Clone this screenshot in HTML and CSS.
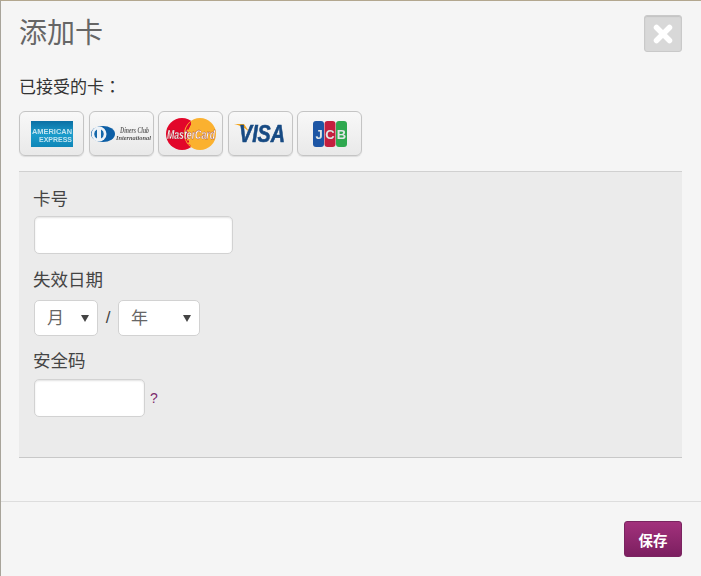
FILE: index.html
```html
<!DOCTYPE html>
<html lang="zh-CN">
<head>
    <meta charset="UTF-8">
    <title>添加卡</title>
    <link rel="stylesheet" href="styles.css">
</head>
<body>
    <div class="dialog">
        <div class="dialog-head">
            <h1 class="dialog-title">添加卡</h1>
            <button class="close-btn" type="button" aria-label="关闭">
                <svg width="24" height="24" viewBox="0 0 24 24"><path d="M5.500 5.500l13 13M18.500 5.500l-13 13" stroke="#fff" stroke-width="5.500" stroke-linecap="round"/></svg>
            </button>
        </div>

        <div class="accepted">
            <p class="accepted-label" lang="zh-TW">已接受的卡：</p>
            <div class="card-list">
                <div class="card-logo">
                    <svg width="44" height="28" viewBox="0 0 44 28">
                        <defs><linearGradient id="amex" x1="0" y1="0" x2="0" y2="1"><stop offset="0" stop-color="#0b6fa4"/><stop offset="0.5" stop-color="#1b9ccb"/><stop offset="1" stop-color="#0f86b8"/></linearGradient></defs>
                        <rect x="1" y="1" width="42" height="26" fill="url(#amex)"/>
                        <text x="2" y="13.500" class="amex-text" textLength="40" lengthAdjust="spacingAndGlyphs">AMERICAN</text>
                        <text x="9" y="22" class="amex-text" textLength="33" lengthAdjust="spacingAndGlyphs">EXPRESS</text>
                    </svg>
                </div>
                <div class="card-logo">
                    <svg width="62" height="20" viewBox="0 0 62 20">
                        <ellipse cx="13" cy="10" rx="12" ry="8" fill="#0d5fa6"/>
                        <circle cx="9" cy="10" r="7.500" fill="#eef3f8"/>
                        <path d="M7 5.500a5 5 0 0 0 0 9zM11 5.500a5 5 0 0 1 0 9z" fill="#1568ab"/>
                        <text x="30" y="9" class="diners-top" textLength="29" lengthAdjust="spacingAndGlyphs">Diners Club</text>
                        <text x="26" y="15.500" class="diners-bottom" textLength="35" lengthAdjust="spacingAndGlyphs">International</text>
                    </svg>
                </div>
                <div class="card-logo">
                    <svg width="52" height="34" viewBox="0 0 52 34">
                        <circle cx="17" cy="17" r="16" fill="#e2062a"/>
                        <circle cx="35" cy="17" r="16" fill="#fbb12f"/>
                        <path d="M26 4.500a16 16 0 0 0 0 25l-1-2h-2v-2h1v-2h-2v-2h1v-2h-1v-3h1v-2h-1v-2h2v-2h1v-2h1z" fill="#e2062a"/>
                        <text x="2" y="22" class="mc-text" textLength="48" lengthAdjust="spacingAndGlyphs">MasterCard</text>
                    </svg>
                </div>
                <div class="card-logo">
                    <svg width="52" height="24" viewBox="0 0 52 24">
                        <path d="M0 2h10l6 9C12 6 6 3.500 0 2z" fill="#f2a51f"/>
                        <text x="5" y="19.500" class="visa-text" textLength="46" lengthAdjust="spacingAndGlyphs">VISA</text>
                    </svg>
                </div>
                <div class="card-logo">
                    <svg width="36" height="28" viewBox="0 0 36 28">
                        <rect x="1" y="1" width="11" height="26" rx="3" fill="#1d56a5"/>
                        <rect x="12.500" y="1" width="11" height="26" rx="3" fill="#c41f3e"/>
                        <rect x="24" y="1" width="11" height="26" rx="3" fill="#2fa84f"/>
                        <text x="7" y="19" class="jcb-text" text-anchor="middle">J</text>
                        <text x="18" y="19" class="jcb-text" text-anchor="middle">C</text>
                        <text x="29.500" y="19" class="jcb-text" text-anchor="middle">B</text>
                    </svg>
                </div>
            </div>
        </div>

        <form class="card-form">
            <label class="field-label" for="cardNumber">卡号</label>
            <input class="text-input number-input" id="cardNumber" type="text">

            <label class="field-label" for="expMonth">失效日期</label>
            <div class="date-row">
                <select class="date-select month-select" id="expMonth"><option>月</option></select>
                <span class="date-sep">/</span>
                <select class="date-select year-select"><option>年</option></select>
            </div>

            <label class="field-label" for="cvv">安全码</label>
            <div class="cvv-row">
                <input class="text-input cvv-input" id="cvv" type="text">
                <a class="cvv-help" href="#">?</a>
            </div>
        </form>

        <div class="dialog-foot">
            <button class="save-btn" type="button">保存</button>
        </div>
    </div>
</body>
</html>
```

FILE: styles.css
```css
* {
    margin: 0;
    padding: 0;
    box-sizing: border-box;
}

body {
    font-family: "Liberation Sans", "Noto Sans CJK SC", sans-serif;
    background: #f5f5f5;
    color: #333;
    overflow: hidden;
}

.dialog {
    height: 576px;
    background: #f5f5f5;
    border-top: 1px solid #b3a78f;
    border-left: 1px solid #a8a49a;
}

.dialog-head {
    display: flex;
    justify-content: space-between;
    align-items: flex-start;
    padding: 14px 19px 0 18px;
}

.dialog-title {
    margin-top: 1px;
    font-size: 28px;
    font-weight: 400;
    line-height: 36px;
    color: #666;
}

.close-btn {
    width: 38px;
    height: 37px;
    display: flex;
    align-items: center;
    justify-content: center;
    background: #d8d8d8;
    border: 1px solid #c9c9c9;
    border-radius: 3px;
    box-shadow: inset 0 1px 1px #c4c4c4;
}

.accepted {
    padding: 0 18px;
    margin-top: 22px;
}

.accepted-label {
    font-family: "Noto Sans CJK TC", sans-serif;
    font-size: 17px;
    line-height: 24px;
}

.card-list {
    display: flex;
    gap: 4.500px;
    margin-top: 13px;
}

.card-logo {
    width: 65px;
    height: 45px;
    display: flex;
    align-items: center;
    justify-content: center;
    background: linear-gradient(#f8f8f8, #e9e9e9);
    border: 1px solid #c4c4c4;
    border-radius: 6px;
    box-shadow: 0 1px 1px #ddd;
}

.card-logo svg {
    overflow: visible;
    filter: blur(0.5px);
}

.amex-text {
    font: 700 7.500px "Liberation Sans", sans-serif;
    fill: #bfe3f0;
}

.diners-top {
    font: italic 700 7.500px "Liberation Serif", serif;
    fill: #666;
}

.diners-bottom {
    font: italic 700 7px "Liberation Serif", serif;
    fill: #555;
}

.mc-text {
    font: italic 700 13px "Liberation Sans", sans-serif;
    fill: #fff;
    stroke: #8a2a2a;
    stroke-width: 0.3px;
}

.visa-text {
    font: italic 700 23.500px "Liberation Sans", sans-serif;
    fill: #174a83;
    stroke: #174a83;
    stroke-width: 0.6px;
}

.jcb-text {
    font: 700 13px "Liberation Sans", sans-serif;
    fill: #dfe6e6;
}

.card-form {
    height: 287px;
    margin: 15px 19px 0 18px;
    padding: 15px 15px 0 15px;
    background: #ebebeb;
    border-top: 1px solid #d0d0d0;
    border-bottom: 1px solid #c8c8c8;
}

.field-label {
    display: block;
    margin-left: -1px;
    font-size: 17.500px;
    line-height: 24px;
    color: #444;
}

.text-input {
    display: block;
    height: 38px;
    background: #fff;
    border: 1px solid #d2d2d2;
    border-radius: 5px;
    box-shadow: inset 0 1px 2px #e2e2e2;
}

.number-input {
    width: 199px;
    margin: 5px 0 14px 0;
}

.date-row {
    display: flex;
    align-items: center;
    height: 36px;
    margin: 8px 0 13px 0;
}

.date-select {
    appearance: none;
    height: 36px;
    padding-left: 12px;
    font-family: inherit;
    font-size: 17px;
    color: #666;
    background: #fff url("data:image/svg+xml,%3Csvg xmlns='http://www.w3.org/2000/svg' width='8' height='7'%3E%3Cpath d='M0 0h8L4 7z' fill='%23444'/%3E%3C/svg%3E") no-repeat right 8px center;
    border: 1px solid #d2d2d2;
    border-radius: 5px;
}

.month-select {
    width: 64px;
}

.year-select {
    width: 82px;
}

.date-sep {
    width: 20px;
    text-align: center;
    font-size: 17px;
    color: #444;
}

.cvv-row {
    display: flex;
    align-items: center;
    margin-top: 6px;
}

.cvv-input {
    width: 111px;
}

.cvv-help {
    margin-left: 5px;
    font-size: 14px;
    color: #7d2a6b;
    text-decoration: none;
}

.dialog-foot {
    display: flex;
    justify-content: flex-end;
    margin-top: 43px;
    padding: 19px 19px 0 18px;
    border-top: 1px solid #ddd;
}

.save-btn {
    width: 58px;
    height: 36px;
    font-family: inherit;
    font-size: 14.500px;
    font-weight: 700;
    color: #fff;
    background: linear-gradient(#a2317c, #7c1f60);
    border: 1px solid #7a2460;
    border-radius: 3px;
}
```
